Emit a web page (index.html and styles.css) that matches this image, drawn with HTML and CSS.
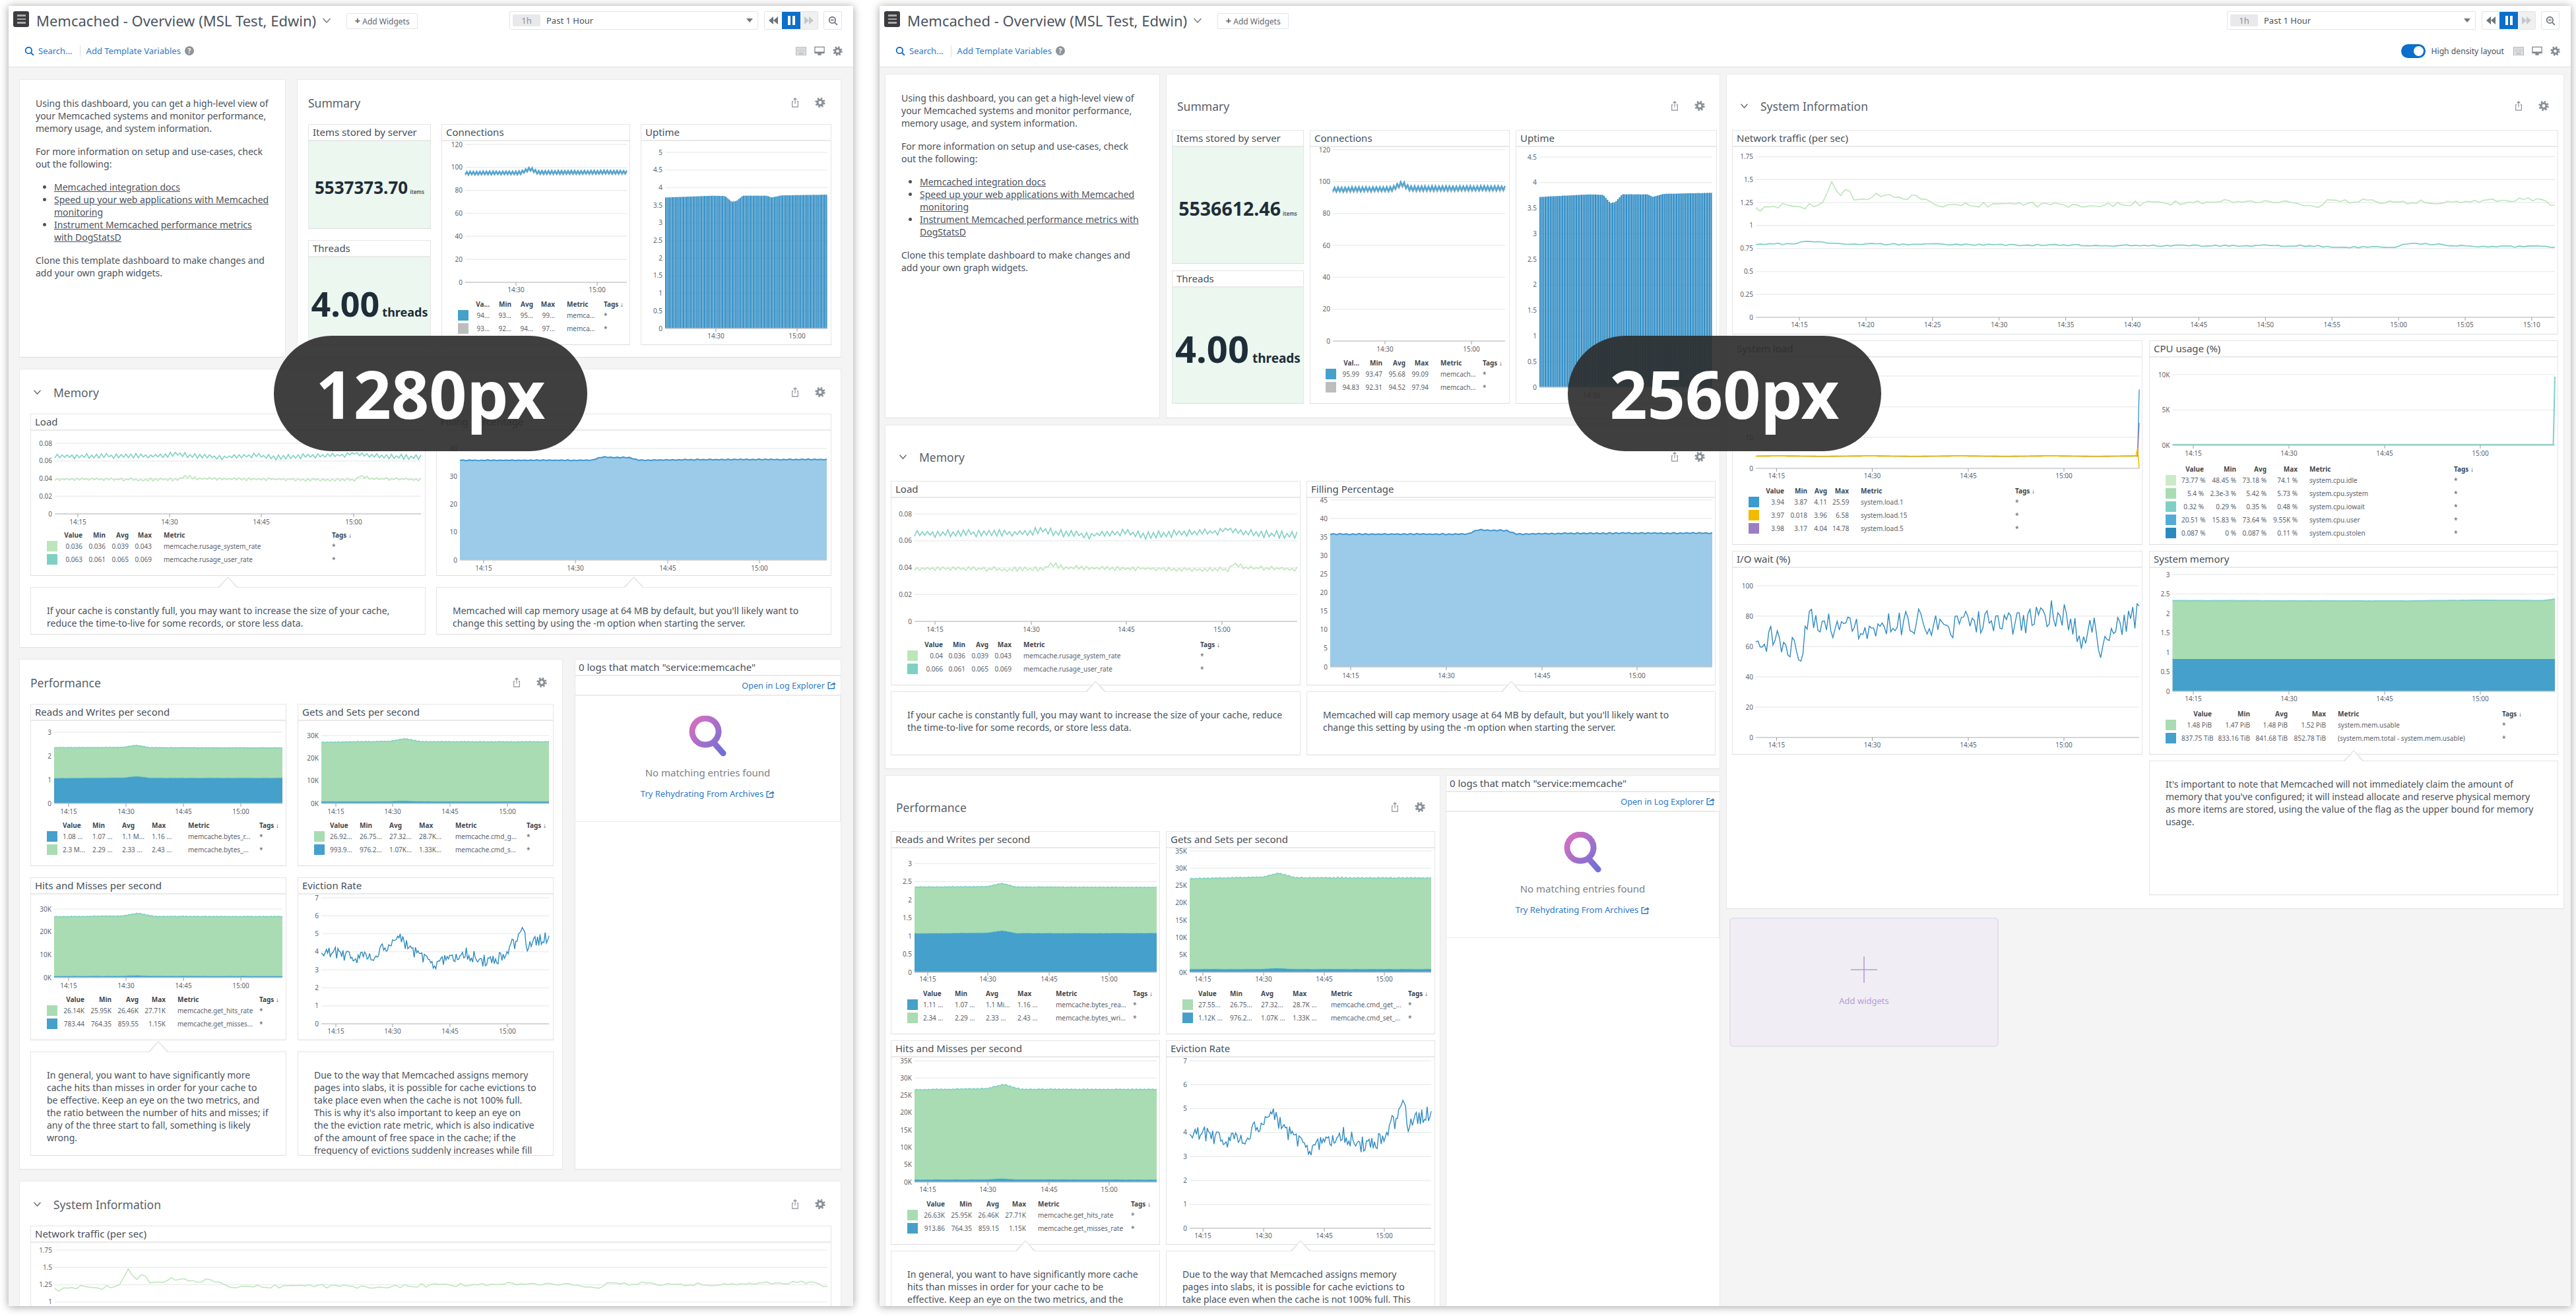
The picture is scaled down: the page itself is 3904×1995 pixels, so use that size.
FILE: index.html
```html
<!DOCTYPE html>
<html lang="en">
<head>
<meta charset="utf-8">
<title>Memcached - Overview</title>
<link rel="stylesheet" href="styles.css">
</head>
<body>
<svg class="defs" width="0" height="0">
  <defs>
    <symbol id="i-gear" viewBox="0 0 24 24"><circle cx="12" cy="12" r="6" fill="none" stroke="currentColor" stroke-width="4.6"/><circle cx="12" cy="12" r="9.6" fill="none" stroke="currentColor" stroke-width="3.8" stroke-dasharray="3.77 3.77"/></symbol>
    <symbol id="i-share" viewBox="0 0 24 24"><path d="M8 9.5H5.5V22h13V9.5H16M12 2v13M8.4 5.6 12 2l3.6 3.6" fill="none" stroke="currentColor" stroke-width="1.7"/></symbol>
    <symbol id="i-chev" viewBox="0 0 14 10"><path d="M1.5 2 7 8l5.5-6" fill="none" stroke="currentColor" stroke-width="1.4"/></symbol>
    <symbol id="i-search" viewBox="0 0 16 16"><circle cx="6.8" cy="6.8" r="5" fill="none" stroke="currentColor" stroke-width="2"/><path d="m10.5 10.5 4.3 4.3" stroke="currentColor" stroke-width="2.2"/></symbol>
    <symbol id="i-zoomout" viewBox="0 0 16 16"><circle cx="6.8" cy="6.8" r="5" fill="none" stroke="currentColor" stroke-width="2"/><path d="m10.5 10.5 4.3 4.3M4.3 6.8h5" stroke="currentColor" stroke-width="2"/></symbol>
    <symbol id="i-kb" viewBox="0 0 18 14"><rect x=".5" y=".5" width="17" height="13" fill="#e6e7e8" stroke="#a6abb0"/><path d="M2.5 3.5h13M2.5 6h13M2.5 8.5h13" stroke="#8f959b" stroke-dasharray="1 1"/><path d="M5 11h8" stroke="#8f959b"/></symbol>
    <symbol id="i-mon" viewBox="0 0 18 16"><rect x="1" y="1" width="16" height="10" fill="#fff" stroke="currentColor" stroke-width="1.4"/><rect x="1" y="9" width="16" height="3" fill="currentColor"/><rect x="6" y="12" width="6" height="3" fill="currentColor"/></symbol>
    <symbol id="i-ext" viewBox="0 0 16 16"><path d="M7 3H2.5v10.5H13V9" fill="none" stroke="currentColor" stroke-width="1.6"/><path d="M6 10c0-4 3-5.6 6-5.6V2l3.5 3.6L12 9V6.6C9.5 6.6 7.5 7.5 6 10z" fill="currentColor"/></symbol>
    <symbol id="i-back" viewBox="0 0 14 12"><path d="M7 0v12L0 6zM14 0v12L7 6z" fill="currentColor"/></symbol>
    <symbol id="i-fwd" viewBox="0 0 14 12"><path d="M0 0v12l7-6zM7 0v12l7-6z" fill="currentColor"/></symbol>
    <linearGradient id="mag" x1="0" y1="0" x2="1" y2="1"><stop offset="0" stop-color="#d86fc0"/><stop offset="1" stop-color="#6f6fd6"/></linearGradient>
    <symbol id="i-mag" viewBox="0 0 60 62"><path d="M26 4a20 20 0 1 0 .01 0zM38 40l15 17" fill="none" stroke="url(#mag)" stroke-width="9" stroke-linecap="round"/></symbol>
  </defs>
</svg>

<div class="desk">

<!-- ========================= 1280 ========================= -->
<div class="win win1">
  <header class="hd">
    <div class="hd-a">
      <span class="burger"><i></i><i></i><i></i></span>
      <h1 class="ttl">Memcached - Overview (MSL Test, Edwin)</h1>
      <svg class="ttl-chev"><use href="#i-chev"/></svg>
      <button class="addw"><b>+</b> Add Widgets</button>
      <div class="time"><span class="pill">1h</span><span class="past">Past 1 Hour</span><span class="caret"></span></div>
      <div class="play"><span class="pb"><svg><use href="#i-back"/></svg></span><span class="pb on"><i></i><i></i></span><span class="pb off"><svg><use href="#i-fwd"/></svg></span></div>
      <span class="zoombtn"><svg><use href="#i-zoomout"/></svg></span>
    </div>
    <div class="hd-b">
      <svg class="srch"><use href="#i-search"/></svg><span class="lnk">Search...</span><span class="div"></span><span class="lnk">Add Template Variables</span><span class="help">?</span>
      <span class="hd-r"><svg class="kb"><use href="#i-kb"/></svg><svg class="mon"><use href="#i-mon"/></svg><svg class="gear-h"><use href="#i-gear"/></svg></span>
    </div>
  </header>
  <main class="board1">
    <div class="r-top1">
      <section class="tx">
        <p>Using this dashboard, you can get a high-level view of your Memcached systems and monitor performance, memory usage, and system information.</p>
        <p>For more information on setup and use-cases, check out the following:</p>
        <ul><li><a>Memcached integration docs</a></li><li><a>Speed up your web applications with Memcached monitoring</a></li><li><a>Instrument Memcached performance metrics with DogStatsD</a></li></ul>
        <p>Clone this template dashboard to make changes and add your own graph widgets.</p>
      </section>
      <section class="sec">
        <div class="sec-h"><h2>Summary</h2><span class="acts"><svg><use href="#i-share"/></svg><svg class="g"><use href="#i-gear"/></svg></span></div>
        <div class="g-sum1">
          <div class="wd"><div class="wt">Items stored by server</div><div class="qv"><b class="q1a">5537373.70</b><span class="q1b">items</span></div></div>
          <div class="wd tall"><div class="wt">Connections</div><div class="chart" id="w1conn"></div>
            <div class="lg lg-c1 pl">
              <b></b><b>Va...</b><b>Min</b><b>Avg</b><b>Max</b><b class="m">Metric</b><b>Tags ↓</b>
              <i class="c-blue"></i><span>94...</span><span>93...</span><span>95...</span><span>99...</span><span class="m">memca...</span><span>*</span>
              <i class="c-gray"></i><span>93...</span><span>92...</span><span>94...</span><span>97...</span><span class="m">memca...</span><span>*</span>
            </div>
          </div>
          <div class="wd tall"><div class="wt">Uptime</div><div class="chart" id="w1up"></div></div>
          <div class="wd"><div class="wt">Threads</div><div class="qv"><b class="q2a">4.00</b><b class="q2b">threads</b></div></div>
        </div>
      </section>
    </div>

    <section class="sec s-mem1">
      <div class="sec-h"><svg class="chev"><use href="#i-chev"/></svg><h2>Memory</h2><span class="acts"><svg><use href="#i-share"/></svg><svg class="g"><use href="#i-gear"/></svg></span></div>
      <div class="g-mem1">
        <div class="wd"><div class="wt">Load</div><div class="chart" id="w1load"></div>
          <div class="lg lg-l1 pl">
            <b></b><b>Value</b><b>Min</b><b>Avg</b><b>Max</b><b class="m">Metric</b><b>Tags ↓</b>
            <i class="c-lgreen"></i><span>0.036</span><span>0.036</span><span>0.039</span><span>0.043</span><span class="m">memcache.rusage_system_rate</span><span>*</span>
            <i class="c-teal"></i><span>0.063</span><span>0.061</span><span>0.065</span><span>0.069</span><span class="m">memcache.rusage_user_rate</span><span>*</span>
          </div>
        </div>
        <div class="wd"><div class="wt">Filling Percentage</div><div class="chart" id="w1fill"></div></div>
        <div class="note">If your cache is constantly full, you may want to increase the size of your cache, reduce the time-to-live for some records, or store less data.</div>
        <div class="note">Memcached will cap memory usage at 64 MB by default, but you'll likely want to change this setting by using the -m option when starting the server.</div>
      </div>
    </section>

    <div class="r-perf1">
      <section class="sec">
        <div class="sec-h"><h2>Performance</h2><span class="acts"><svg><use href="#i-share"/></svg><svg class="g"><use href="#i-gear"/></svg></span></div>
        <div class="g-perf1">
          <div class="wd"><div class="wt">Reads and Writes per second</div><div class="chart" id="w1reads"></div>
            <div class="lg lg-r1 pl left">
              <b></b><b>Value</b><b>Min</b><b>Avg</b><b>Max</b><b class="m">Metric</b><b>Tags ↓</b>
              <i class="c-blue"></i><span>1.08 ...</span><span>1.07 ...</span><span>1.1 M...</span><span>1.16 ...</span><span class="m">memcache.bytes_r...</span><span>*</span>
              <i class="c-green"></i><span>2.3 M...</span><span>2.29 ...</span><span>2.33 ...</span><span>2.43 ...</span><span class="m">memcache.bytes_...</span><span>*</span>
            </div>
          </div>
          <div class="wd"><div class="wt">Gets and Sets per second</div><div class="chart" id="w1gets"></div>
            <div class="lg lg-r1 pl left">
              <b></b><b>Value</b><b>Min</b><b>Avg</b><b>Max</b><b class="m">Metric</b><b>Tags ↓</b>
              <i class="c-green"></i><span>26.92...</span><span>26.75...</span><span>27.32...</span><span>28.7K...</span><span class="m">memcache.cmd_g...</span><span>*</span>
              <i class="c-blue"></i><span>993.9...</span><span>976.2...</span><span>1.07K...</span><span>1.33K...</span><span class="m">memcache.cmd_s...</span><span>*</span>
            </div>
          </div>
          <div class="wd"><div class="wt">Hits and Misses per second</div><div class="chart" id="w1hits"></div>
            <div class="lg lg-h1 pl">
              <b></b><b>Value</b><b>Min</b><b>Avg</b><b>Max</b><b class="m">Metric</b><b>Tags ↓</b>
              <i class="c-green"></i><span>26.14K</span><span>25.95K</span><span>26.46K</span><span>27.71K</span><span class="m">memcache.get_hits_rate</span><span>*</span>
              <i class="c-blue"></i><span>783.44</span><span>764.35</span><span>859.55</span><span>1.15K</span><span class="m">memcache.get_misses...</span><span>*</span>
            </div>
          </div>
          <div class="wd"><div class="wt">Eviction Rate</div><div class="chart" id="w1evict"></div></div>
          <div class="note">In general, you want to have significantly more cache hits than misses in order for your cache to be effective. Keep an eye on the two metrics, and the ratio between the number of hits and misses; if any of the three start to fall, something is likely wrong.</div>
          <div class="note">Due to the way that Memcached assigns memory pages into slabs, it is possible for cache evictions to take place even when the cache is not 100% full. This is why it's also important to keep an eye on the the eviction rate metric, which is also indicative of the amount of free space in the cache; if the frequency of evictions suddenly increases while fill</div>
        </div>
      </section>
      <section class="logs">
        <div class="wt log-t">0 logs that match "service:memcache"</div>
        <div class="log-open"><span class="lnk">Open in Log Explorer</span><svg><use href="#i-ext"/></svg></div>
        <div class="log-body"><svg class="mag"><use href="#i-mag"/></svg><div class="log-no">No matching entries found</div><div class="log-try"><span class="lnk">Try Rehydrating From Archives</span><svg><use href="#i-ext"/></svg></div></div>
      </section>
    </div>

    <section class="sec s-sys1">
      <div class="sec-h"><svg class="chev"><use href="#i-chev"/></svg><h2>System Information</h2><span class="acts"><svg><use href="#i-share"/></svg><svg class="g"><use href="#i-gear"/></svg></span></div>
      <div class="wd net1"><div class="wt">Network traffic (per sec)</div><div class="chart" id="w1net"></div></div>
    </section>
  </main>
</div>

<!-- ========================= 2560 ========================= -->
<div class="win win2">
  <header class="hd">
    <div class="hd-a">
      <span class="burger"><i></i><i></i><i></i></span>
      <h1 class="ttl">Memcached - Overview (MSL Test, Edwin)</h1>
      <svg class="ttl-chev"><use href="#i-chev"/></svg>
      <button class="addw"><b>+</b> Add Widgets</button>
      <div class="time"><span class="pill">1h</span><span class="past">Past 1 Hour</span><span class="caret"></span></div>
      <div class="play"><span class="pb"><svg><use href="#i-back"/></svg></span><span class="pb on"><i></i><i></i></span><span class="pb off"><svg><use href="#i-fwd"/></svg></span></div>
      <span class="zoombtn"><svg><use href="#i-zoomout"/></svg></span>
    </div>
    <div class="hd-b">
      <svg class="srch"><use href="#i-search"/></svg><span class="lnk">Search...</span><span class="div"></span><span class="lnk">Add Template Variables</span><span class="help">?</span>
      <span class="hd-r"><span class="toggle"></span><span class="hdl">High density layout</span><svg class="kb"><use href="#i-kb"/></svg><svg class="mon"><use href="#i-mon"/></svg><svg class="gear-h"><use href="#i-gear"/></svg></span>
    </div>
  </header>
  <main class="board2">
    <div class="col-l">
      <div class="r-top2">
        <section class="tx">
          <p>Using this dashboard, you can get a high-level view of your Memcached systems and monitor performance, memory usage, and system information.</p>
          <p>For more information on setup and use-cases, check out the following:</p>
          <ul><li><a>Memcached integration docs</a></li><li><a>Speed up your web applications with Memcached monitoring</a></li><li><a>Instrument Memcached performance metrics with DogStatsD</a></li></ul>
          <p>Clone this template dashboard to make changes and add your own graph widgets.</p>
        </section>
        <section class="sec s2 h522">
          <div class="sec-h"><h2>Summary</h2><span class="acts"><svg><use href="#i-share"/></svg><svg class="g"><use href="#i-gear"/></svg></span></div>
          <div class="g-sum2">
            <div class="wd"><div class="wt">Items stored by server</div><div class="qv"><b class="q3a">5536612.46</b><span class="q1b">items</span></div></div>
            <div class="wd tall"><div class="wt">Connections</div><div class="chart" id="w2conn"></div>
              <div class="lg lg-c2 pl">
                <b></b><b>Val...</b><b>Min</b><b>Avg</b><b>Max</b><b class="m">Metric</b><b>Tags ↓</b>
                <i class="c-blue"></i><span>95.99</span><span>93.47</span><span>95.68</span><span>99.09</span><span class="m">memcach...</span><span>*</span>
                <i class="c-gray"></i><span>94.83</span><span>92.31</span><span>94.52</span><span>97.94</span><span class="m">memcach...</span><span>*</span>
              </div>
            </div>
            <div class="wd tall"><div class="wt">Uptime</div><div class="chart" id="w2up"></div></div>
            <div class="wd"><div class="wt">Threads</div><div class="qv"><b class="q4a">4.00</b><b class="q4b">threads</b></div></div>
          </div>
        </section>
      </div>

      <section class="sec s2 h522">
        <div class="sec-h"><svg class="chev"><use href="#i-chev"/></svg><h2>Memory</h2><span class="acts"><svg><use href="#i-share"/></svg><svg class="g"><use href="#i-gear"/></svg></span></div>
        <div class="g-mem2">
          <div class="wd"><div class="wt">Load</div><div class="chart" id="w2load"></div>
            <div class="lg lg-l2 pl">
              <b></b><b>Value</b><b>Min</b><b>Avg</b><b>Max</b><b class="m">Metric</b><b>Tags ↓</b>
              <i class="c-lgreen"></i><span>0.04</span><span>0.036</span><span>0.039</span><span>0.043</span><span class="m">memcache.rusage_system_rate</span><span>*</span>
              <i class="c-teal"></i><span>0.066</span><span>0.061</span><span>0.065</span><span>0.069</span><span class="m">memcache.rusage_user_rate</span><span>*</span>
            </div>
          </div>
          <div class="wd"><div class="wt">Filling Percentage</div><div class="chart" id="w2fill"></div></div>
          <div class="note">If your cache is constantly full, you may want to increase the size of your cache, reduce the time-to-live for some records, or store less data.</div>
          <div class="note">Memcached will cap memory usage at 64 MB by default, but you'll likely want to change this setting by using the -m option when starting the server.</div>
        </div>
      </section>

      <div class="r-perf2">
        <section class="sec s2">
          <div class="sec-h"><h2>Performance</h2><span class="acts"><svg><use href="#i-share"/></svg><svg class="g"><use href="#i-gear"/></svg></span></div>
          <div class="g-perf2">
            <div class="wd"><div class="wt">Reads and Writes per second</div><div class="chart" id="w2reads"></div>
              <div class="lg lg-r2 pl left">
                <b></b><b>Value</b><b>Min</b><b>Avg</b><b>Max</b><b class="m">Metric</b><b>Tags ↓</b>
                <i class="c-blue"></i><span>1.11 ...</span><span>1.07 ...</span><span>1.1 Mi...</span><span>1.16 ...</span><span class="m">memcache.bytes_rea...</span><span>*</span>
                <i class="c-green"></i><span>2.34 ...</span><span>2.29 ...</span><span>2.33 ...</span><span>2.43 ...</span><span class="m">memcache.bytes_wri...</span><span>*</span>
              </div>
            </div>
            <div class="wd"><div class="wt">Gets and Sets per second</div><div class="chart" id="w2gets"></div>
              <div class="lg lg-r2 pl left">
                <b></b><b>Value</b><b>Min</b><b>Avg</b><b>Max</b><b class="m">Metric</b><b>Tags ↓</b>
                <i class="c-green"></i><span>27.55...</span><span>26.75...</span><span>27.32...</span><span>28.7K ...</span><span class="m">memcache.cmd_get_...</span><span>*</span>
                <i class="c-blue"></i><span>1.12K ...</span><span>976.2...</span><span>1.07K ...</span><span>1.33K ...</span><span class="m">memcache.cmd_set_...</span><span>*</span>
              </div>
            </div>
            <div class="wd"><div class="wt">Hits and Misses per second</div><div class="chart" id="w2hits"></div>
              <div class="lg lg-h2 pl">
                <b></b><b>Value</b><b>Min</b><b>Avg</b><b>Max</b><b class="m">Metric</b><b>Tags ↓</b>
                <i class="c-green"></i><span>26.63K</span><span>25.95K</span><span>26.46K</span><span>27.71K</span><span class="m">memcache.get_hits_rate</span><span>*</span>
                <i class="c-blue"></i><span>913.86</span><span>764.35</span><span>859.15</span><span>1.15K</span><span class="m">memcache.get_misses_rate</span><span>*</span>
              </div>
            </div>
            <div class="wd"><div class="wt">Eviction Rate</div><div class="chart" id="w2evict"></div></div>
            <div class="note">In general, you want to have significantly more cache hits than misses in order for your cache to be effective. Keep an eye on the two metrics, and the ratio between the number of hits and misses; if any of the three start to fall, something is likely wrong.</div>
            <div class="note">Due to the way that Memcached assigns memory pages into slabs, it is possible for cache evictions to take place even when the cache is not 100% full. This is why it's also important to keep an eye on the the eviction rate metric, which is also indicative of the amount of free space in the cache.</div>
          </div>
        </section>
        <section class="logs">
          <div class="wt log-t">0 logs that match "service:memcache"</div>
          <div class="log-open"><span class="lnk">Open in Log Explorer</span><svg><use href="#i-ext"/></svg></div>
          <div class="log-body"><svg class="mag"><use href="#i-mag"/></svg><div class="log-no">No matching entries found</div><div class="log-try"><span class="lnk">Try Rehydrating From Archives</span><svg><use href="#i-ext"/></svg></div></div>
        </section>
      </div>
    </div>

    <div class="col-r">
      <section class="sec s2 s-sys2">
        <div class="sec-h"><svg class="chev"><use href="#i-chev"/></svg><h2>System Information</h2><span class="acts"><svg><use href="#i-share"/></svg><svg class="g"><use href="#i-gear"/></svg></span></div>
        <div class="g-sys2">
          <div class="wd span2"><div class="wt">Network traffic (per sec)</div><div class="chart" id="w2net"></div></div>
          <div class="wd"><div class="wt">System load</div><div class="chart" id="w2sysl"></div>
            <div class="lg lg-s2 pl rows3">
              <b></b><b>Value</b><b>Min</b><b>Avg</b><b>Max</b><b class="m">Metric</b><b>Tags ↓</b>
              <i class="c-blue2"></i><span>3.94</span><span>3.87</span><span>4.11</span><span>25.59</span><span class="m">system.load.1</span><span>*</span>
              <i class="c-yellow"></i><span>3.97</span><span>0.018</span><span>3.96</span><span>6.58</span><span class="m">system.load.15</span><span>*</span>
              <i class="c-purple"></i><span>3.98</span><span>3.17</span><span>4.04</span><span>14.78</span><span class="m">system.load.5</span><span>*</span>
            </div>
          </div>
          <div class="wd"><div class="wt">CPU usage (%)</div><div class="chart" id="w2cpu"></div>
            <div class="lg lg-cpu pl tight">
              <b></b><b>Value</b><b>Min</b><b>Avg</b><b>Max</b><b class="m">Metric</b><b>Tags ↓</b>
              <i class="c-idle"></i><span>73.77 %</span><span>48.45 %</span><span>73.18 %</span><span>74.1 %</span><span class="m">system.cpu.idle</span><span>*</span>
              <i class="c-green"></i><span>5.4 %</span><span>2.3e-3 %</span><span>5.42 %</span><span>5.73 %</span><span class="m">system.cpu.system</span><span>*</span>
              <i class="c-teal"></i><span>0.32 %</span><span>0.29 %</span><span>0.35 %</span><span>0.48 %</span><span class="m">system.cpu.iowait</span><span>*</span>
              <i class="c-user"></i><span>20.51 %</span><span>15.83 %</span><span>73.64 %</span><span>9.55K %</span><span class="m">system.cpu.user</span><span>*</span>
              <i class="c-stolen"></i><span>0.087 %</span><span>0 %</span><span>0.087 %</span><span>0.11 %</span><span class="m">system.cpu.stolen</span><span>*</span>
            </div>
          </div>
          <div class="wd"><div class="wt">I/O wait (%)</div><div class="chart" id="w2io"></div></div>
          <div class="wd"><div class="wt">System memory</div><div class="chart" id="w2mem"></div>
            <div class="lg lg-mem pl">
              <b></b><b>Value</b><b>Min</b><b>Avg</b><b>Max</b><b class="m">Metric</b><b>Tags ↓</b>
              <i class="c-green"></i><span>1.48 PiB</span><span>1.47 PiB</span><span>1.48 PiB</span><span>1.52 PiB</span><span class="m">system.mem.usable</span><span>*</span>
              <i class="c-blue"></i><span>837.75 TiB</span><span>833.16 TiB</span><span>841.68 TiB</span><span>852.78 TiB</span><span class="m">(system.mem.total - system.mem.usable)</span><span>*</span>
            </div>
          </div>
          <div class="blank"></div>
          <div class="note">It's important to note that Memcached will not immediately claim the amount of memory that you've configured; it will instead allocate and reserve physical memory as more items are stored, using the value of the flag as the upper bound for memory usage.</div>
        </div>
      </section>
      <div class="addcard"><svg class="plus" viewBox="0 0 40 40"><path d="M20 0v40M0 20h40" stroke="currentColor" stroke-width="1.6"/></svg><span>Add widgets</span></div>
    </div>
  </main>
</div>

<div class="badge b1">1280px</div>
<div class="badge b2">2560px</div>
</div>
<script src="charts.js"></script>
</body>
</html>
```
FILE: styles.css
```css
*{box-sizing:border-box}
html,body{margin:0;height:100%;overflow:hidden;background:#fff}
body{font-family:"Noto Sans","Open Sans",sans-serif;color:#4a525c}
.defs{position:absolute}
.desk{position:relative;display:flex;gap:40px;padding:9px 0 0 13px;height:1995px}
.win{height:1971px;overflow:hidden;display:flex;flex-direction:column;background:#f4f4f4;box-shadow:0 1px 12px rgba(0,0,0,.38);flex:none}
.win1{width:1280px}
.win2{width:2563px}

/* header */
.hd{flex:none;height:93px;background:#fff;border-bottom:1px solid #e0e0e0}
.hd-a{display:flex;align-items:center;height:28px;margin-top:8px;padding:0 17px 0 7px}
.burger{width:24px;height:24px;border-radius:3px;background:#3c3c40;display:flex;flex-direction:column;justify-content:center;align-items:center;gap:3px;margin-top:-4px}
.burger i{display:block;width:13px;height:2.4px;background:#aaa}
.ttl{margin:0 0 0 11px;font-weight:400;font-size:22px;color:#4d555e;white-space:nowrap;line-height:28px}
.ttl-chev{width:14px;height:10px;margin-left:9px;color:#707780}
.addw{margin-left:23px;height:24px;width:108px;padding:0;background:#fff;border:1px solid #e4e5e6;border-radius:2px;font:12px "Noto Sans",sans-serif;color:#5f666e;margin-top:2px}
.addw b{font-size:15px;color:#666;line-height:10px}
.time{margin-left:auto;width:377px;height:28px;border:1px solid #e3e4e6;border-radius:2px;display:flex;align-items:center;padding:0 7px 0 4px}
.pill{width:42px;height:18px;background:#e9e9ec;border-radius:2px;text-align:center;line-height:18px;font-size:13px;color:#8a8f95}
.past{margin-left:9px;font-size:13px;color:#4a525c}
.caret{margin-left:auto;border:5px solid transparent;border-top:6px solid #6f767d;border-bottom:0;margin-right:0}
.play{margin-left:9px;width:82px;height:28px;border:1px solid #e3e4e6;border-radius:2px;display:flex}
.pb{flex:1;display:flex;align-items:center;justify-content:center;gap:3px;color:#6d747b}
.pb svg{width:14px;height:12px}
.pb.on{background:#0b6fcb;flex:none;width:28px}
.pb.on i{display:block;width:4px;height:14px;background:#fff}
.pb.off{background:#f0f0f1;color:#c4c7ca}
.zoombtn{margin-left:8px;width:28px;height:28px;border:1px solid #e3e4e6;border-radius:2px;display:flex;align-items:center;justify-content:center;color:#747b82}
.zoombtn svg{width:15px;height:15px}
.hd-b{display:flex;align-items:center;height:20px;margin-top:22px;padding:0 16px 0 24px}
.srch{width:15px;height:15px;color:#0b6fcb}
.lnk{font-size:13px;color:#2b79c8}
.srch + .lnk{margin-left:6px}
.div{width:1px;height:17px;background:#dcdde0;margin:0 9px 0 11px}
.help{margin-left:6px;width:14px;height:14px;border-radius:50%;background:#8f9499;color:#fff;font-size:10px;font-weight:700;line-height:14px;text-align:center}
.hd-r{margin-left:auto;display:flex;align-items:center}
.kb{width:16px;height:13px}
.mon{width:16px;height:15px;margin-left:12px;color:#7f868d}
.gear-h{width:15px;height:15px;margin-left:12px;color:#848a90}
.toggle{position:relative;width:37px;height:21px;border-radius:11px;background:#0b6fcb;margin-right:8px}
.toggle::after{content:"";position:absolute;right:3px;top:3px;width:15px;height:15px;border-radius:50%;background:#fff}
.hdl{font-size:12.2px;color:#4a525c;margin-right:14px}

/* boards */
.board1{display:flex;flex-direction:column;gap:17px;padding:18px 18px 0 16px}
.r-top1{display:grid;grid-template-columns:404px 825px;gap:17px;height:422px}
.r-perf1{display:grid;grid-template-columns:824px 404px;gap:18px;height:774px}
.board2{display:grid;grid-template-columns:1266px 1270px;column-gap:9px;padding:10px 0 0 8px}
.col-l{display:flex;flex-direction:column;gap:9px}
.r-top2{display:grid;grid-template-columns:417px 840px;gap:9px;height:522px;margin-bottom:1px}
.r-perf2{display:grid;grid-template-columns:842px 416px;gap:8px;height:820px}
.col-r{display:flex;flex-direction:column}

/* panels */
.tx,.sec,.logs{background:#fff;border:1px solid #e9e9e9;border-bottom-color:#dfdfdf}
.tx{padding:26px 22px 0 24px;font-size:14px;line-height:19px;color:#4a525c}
.tx p{margin:0 0 16px}
.tx ul{margin:0 0 16px;padding:0 0 0 28px}
.tx a{text-decoration:underline}
.sec{padding-left:16px}
.s2{padding-left:8px}
.h522{height:522px}
.sec-h{display:flex;align-items:center;height:67px;padding:2px 23px 0 0}
.s2 .sec-h{height:84px;padding:13px 22px 2px 8px}
.sec-h h2{margin:0;font-weight:400;font-size:17.5px;color:#5a6169}
.chev{width:13px;height:9px;margin:0 18px 0 4px;color:#59616a}
.acts{margin-left:auto;display:flex;gap:22px;color:#8a9097}
.acts svg{width:16px;height:17px}
.s-mem1{height:423px}
.s-sys1{height:600px}
.s-sys2{height:1266px;flex:none}

/* grids */
.g-sum1{display:grid;grid-template-columns:186px 286px 289px;grid-template-rows:159px 159px;gap:17px 16px}
.g-sum2{display:grid;grid-template-columns:200px 303px 305px;grid-template-rows:203px 202px;gap:10px 9px}
.g-mem1{display:grid;grid-template-columns:599px 599px;grid-template-rows:246px 72px;gap:17px 16px}
.g-mem2{display:grid;grid-template-columns:621px 620px;grid-template-rows:310px 97px;gap:9px}
.g-perf1{display:grid;grid-template-columns:388px 388px;grid-template-rows:246px 247px 158px;gap:17px}
.g-perf2{display:grid;grid-template-columns:408px 408px;grid-template-rows:308px 310px 300px;gap:9px}
.g-sys2{display:grid;grid-template-columns:622px 620px;grid-template-rows:310px 310px 309px 204px;gap:9px 10px}
.span2{grid-column:span 2}
.tall{grid-row:span 2}
.net1{width:1214px;height:400px}

/* widgets */
.wd{display:flex;flex-direction:column;min-width:0;min-height:0;background:#fff;border:1px solid #e4e5e6;border-bottom-color:#dcdddf}
.wt{flex:none;height:25px;line-height:23px;padding-left:6px;font-size:15px;color:#47505a;border-bottom:2px solid #e9e9ea;white-space:nowrap}
.chart{flex:1;min-height:0}
.chart svg{display:block;overflow:visible}
.chart text{font-family:"Noto Sans","Open Sans",sans-serif;font-size:10px;fill:#5f666e}
.qv{flex:1;background:#ebf7ef;display:flex;align-items:baseline;justify-content:center;padding-top:60px;color:#1e2d38;white-space:nowrap}
.g-sum1 .qv{padding-top:52px}
.q1a{font-size:26px}
.q1b{font-size:8px;margin-left:3px;font-weight:600;color:#4a525c}
.q2a{font-size:52px;margin-top:-12px;line-height:60px}
.q2b{font-size:18px;margin-left:4px}
.q3a{font-size:28.5px;padding-top:14px}
.q4a{font-size:56px;line-height:60px;margin-top:2px}
.q4b{font-size:19px;margin-left:5px}

/* legend */
.lg{flex:none;display:grid;column-gap:8px;grid-auto-rows:20px;grid-template-rows:15px;align-items:center;font-size:10px;color:#5a626b;padding-left:24px;padding-bottom:14px;white-space:nowrap}
.lg b{color:#3e4750;font-weight:700;text-align:right}
.lg span{text-align:right}
.lg i{display:block;width:16px;height:16px}
.lg .m,.lg b.m,.lg span.m{text-align:left;padding-left:10px}
.lg b:nth-child(7),.lg span:nth-child(7n){text-align:left}
.lg.left b,.lg.left span{text-align:left}
.lg.tight{padding-bottom:7px}
.lg-c1{grid-template-columns:16px 24px 25px 25px 25px 58px auto}
.lg-l1{grid-template-columns:16px 30px 27px 27px 27px 257px auto}
.lg-r1{grid-template-columns:16px 37px 37px 37px 37px 110px auto}
.lg-h1{grid-template-columns:16px 33px 33px 33px 33px 126px auto}
.lg-c2{grid-template-columns:16px 27px 27px 27px 27px 66px auto;padding-left:23px}
.lg-l2{grid-template-columns:16px 30px 26px 27px 27px 270px auto}
.lg-r2{grid-template-columns:16px 40px 39px 40px 40px 119px auto}
.lg-h2{grid-template-columns:16px 33px 33px 33px 33px 143px auto}
.lg-s2{grid-template-columns:16px 30px 27px 22px 25px 236px auto}
.lg-cpu{grid-template-columns:16px 34px 41px 38px 39px 221px auto}
.lg-mem{grid-template-columns:16px 46px 50px 49px 50px 251px auto}
.c-blue{background:#45a0cb}.c-blue2{background:#3c9bd0}.c-gray{background:#bdbdbd}.c-green{background:#a9dcb2}.c-lgreen{background:#bce6b9}.c-teal{background:#7fd0c4}
.c-yellow{background:#f2bb00}.c-purple{background:#9b7ec4}.c-idle{background:#cbeac8}.c-user{background:#52acd6}.c-stolen{background:#2a8ac0}

/* notes */
.note{position:relative;background:#fff;border:1px solid #e4e5e6;border-bottom-color:#dcdddf;padding:25px 24px 0;font-size:14px;line-height:19px;color:#4a525c;min-height:0}
.note::before,.note::after{content:"";position:absolute;left:50%;margin-left:-16px;top:-17px;width:32px;height:17px;background:#e4e5e6;clip-path:polygon(50% 0,100% 100%,0 100%)}
.note::after{top:-15px;margin-left:-15px;width:30px;height:17px;background:#fff}
.g-perf1 .note:last-child{overflow:hidden;clip-path:inset(-18px 0 0 0)}
.blank{min-height:0}

/* logs */
.logs{display:flex;flex-direction:column}
.log-t{border-bottom:2px solid #e9e9ea;padding-left:5px}
.log-open{flex:none;height:30px;display:flex;align-items:center;justify-content:flex-end;padding-right:7px;border-bottom:2px solid #ebebeb}
.log-open .lnk{font-size:12.7px}
.log-try .lnk{font-size:13px}
.log-open svg,.log-try svg{width:14px;height:14px;margin-left:3px;color:#2b79c8}
.log-body{flex:none;height:191px;display:flex;flex-direction:column;align-items:center;border:1px solid #ededed;border-top:0;border-left:0;padding-top:30px}
.mag{width:60px;height:62px}
.log-no{margin-top:15px;font-size:15px;color:#7b8188;line-height:19px}
.log-try{margin-top:13px;display:flex;align-items:center;line-height:19px}

/* add widgets */
.addcard{flex:none;margin:13px 0 0 5px;width:408px;height:196px;background:#f0eef4;border:2px solid #e4dfec;border-radius:6px;display:flex;flex-direction:column;align-items:center;padding-top:57px;color:#b89ad8;font-size:13px}
.plus{width:40px;height:40px}
.addcard span{margin-top:18px}

/* screenshot labels */
.badge{position:absolute;top:509px;width:475px;height:175px;border-radius:88px;background:rgba(44,44,44,.91);color:#fff;font-weight:700;font-size:100px;line-height:175px;text-align:center}
.b1{left:415px}
.b2{left:2376px}
```
FILE: charts.js
```js
(function () {
  function rng(seed) { return function () { seed = (seed * 16807) % 2147483647; return seed / 2147483647; }; }
  function curve(a, n, noise, seed, zz) {
    var r = rng(seed * 7919), out = [];
    for (var i = 0; i < n; i++) {
      var t = i / (n - 1), k = 0;
      while (k < a.length - 2 && a[k + 1][0] < t) k++;
      var p = a[k], q = a[k + 1];
      var v = p[1] + (q[1] - p[1]) * (t - p[0]) / (q[0] - p[0]);
      v += (r() - 0.5) * noise + (zz ? (i % 2 ? zz : -zz) : 0);
      out.push(v);
    }
    return out;
  }
  var N = function (l) { return l.map(function (v) { return [v, String(v)]; }); };
  var K = function (l) { return l.map(function (v) { return [v * 1000, v + 'K']; }); };
  function X(list) { var L = ['14:15', '14:30', '14:45', '15:00']; return list.map(function (x, i) { return [L[i], x]; }); }

  var D = {
    conn: curve([[0, 95.2], [.34, 95.5], [.4, 99], [.45, 95.8], [1, 96]], 100, .4, 11, 1.3),
    connG: curve([[0, 94], [.34, 94.4], [.4, 97.5], [.45, 94.5], [1, 94.8]], 100, .4, 12, 1.1),
    up: curve([[0, 3.72], [.3, 3.77], [.37, 3.76], [.41, 3.6], [.44, 3.62], [.48, 3.77], [.63, 3.77], [.66, 3.72], [.72, 3.78], [1, 3.8]], 100, .005, 5),
    lg: curve([[0, .039], [.33, .039], [.36, .0425], [.39, .04], [.82, .0385], [.835, .043], [.86, .04], [1, .039]], 150, .0016, 7, .001),
    lt: curve([[0, .065], [.3, .066], [.33, .068], [.37, .066], [.45, .064], [.55, .066], [.6, .064], [.8, .067], [.82, .069], [.85, .066], [1, .064]], 150, .0022, 9, .0018),
    fill: curve([[0, 35.8], [.36, 35.8], [.385, 36.9], [.46, 36.8], [.49, 35.8], [.62, 36], [1, 36.1]], 120, .12, 13, .12),
    rb: curve([[0, 1.08], [.3, 1.1], [.36, 1.16], [.42, 1.09], [1, 1.09]], 120, .005, 15, .004),
    rg: curve([[0, 1.27], [.3, 1.26], [.36, 1.29], [.42, 1.26], [1, 1.25]], 120, .005, 17, .004),
    gb: curve([[0, 1000], [.3, 1050], [.36, 1300], [.42, 1050], [1, 1000]], 120, 60, 19),
    gg: curve([[0, 26000], [.3, 26400], [.37, 27300], [.44, 26200], [1, 26200]], 120, 120, 21, 140),
    hb: curve([[0, 800], [.3, 850], [.36, 1100], [.42, 850], [1, 800]], 120, 60, 23),
    hg: curve([[0, 25800], [.3, 26100], [.37, 27000], [.44, 25900], [1, 25900]], 120, 120, 25, 140),
    ev: curve([[0, 3.8], [.02, 4.1], [.1, 3.7], [.2, 3.7], [.25, 4], [.3, 4.3], [.335, 4.8], [.38, 4.3], [.42, 3.9], [.5, 3.35], [.6, 3.7], [.64, 3.95], [.7, 3.5], [.8, 3.7], [.82, 3.7], [.84, 4.6], [.86, 4.4], [.885, 5.5], [.905, 4.1], [.95, 4.6], [1, 4.8]], 180, .75, 27),
    io: curve([[0, 58], [.03, 62], [.05, 70], [.08, 60], [.12, 58], [.135, 80], [.2, 73], [.3, 71], [.4, 77], [.5, 74], [.6, 76], [.7, 76], [.77, 82], [.82, 78], [.85, 65], [.875, 78], [.9, 60], [.93, 72], [1, 82]], 180, 17, 29),
    ng: curve([[0, 1.17], [.03, 1.22], [.05, 1.19], [.085, 1.25], [.095, 1.46], [.105, 1.34], [.115, 1.44], [.125, 1.25], [.15, 1.33], [.2, 1.31], [.23, 1.22], [.3, 1.23], [.4, 1.22], [.48, 1.24], [.67, 1.27], [.7, 1.18], [.72, 1.28], [.8, 1.25], [.9, 1.26], [.98, 1.28], [1, 1.2]], 180, .055, 31),
    nt: curve([[0, .8], [.05, .8], [.058, .83], [.1, .8], [.3, .79], [.5, .78], [.7, .78], [.72, .76], [.8, .77], [.82, .81], [.9, .77], [1, .77]], 180, .018, 33),
    mb: curve([[0, .83], [1, .83]], 120, .003, 35),
    mg: curve([[0, 1.5], [.6, 1.49], [.8, 1.51], [.97, 1.5], [1, 1.54]], 120, .004, 37)
  };
  function flatEnd(v, tail, n) { var o = []; for (var i = 0; i < n; i++) o.push(v + Math.sin(i / 9) * .03); tail.forEach(function (t, k) { o[n - tail.length + k] = t; }); return o; }

  var CH = {
    w1conn: { xl: 705, xr: 950, y0: 428, top: [120, 219], yt: N([0, 20, 40, 60, 80, 100, 120]), xt: [['14:30', 782], ['15:00', 905]], ly: 439, s: [{ t: 'l', c: '#bdbdbd', w: 1.5, d: D.connG }, { t: 'l', c: '#52a6d2', w: 2.4, d: D.conn }] },
    w1up: { xl: 1008, xr: 1254, y0: 498, top: [5, 231], yt: N([0, .5, 1, 1.5, 2, 2.5, 3, 3.5, 4, 4.5, 5]), xt: [['14:30', 1085], ['15:00', 1208]], ly: 509, s: [{ t: 'b', c: '#2f8cc4', d: D.up }] },
    w1load: { xl: 83, xr: 638, y0: 779, top: [.08, 672], yt: N([0, .02, .04, .06, .08]), xt: X([118, 257, 396, 536]), ly: 791, s: [{ t: 'l', c: '#bce6b9', w: 1.6, d: D.lg }, { t: 'l', c: '#7fd0c4', w: 1.6, d: D.lt }] },
    w1fill: { xl: 697, xr: 1253, y0: 849, top: [40, 680], yt: N([0, 10, 20, 30, 40]), xt: X([733, 872, 1012, 1151]), ly: 861, s: [{ t: 's', l: [{ c: '#9bcbe8', e: '#3f97d0', d: D.fill, ew: 2 }] }] },
    w1reads: { xl: 82, xr: 428, y0: 1218, top: [3, 1110], yt: N([0, 1, 2, 3]), xt: X([104, 191, 278, 365]), ly: 1230, s: [{ t: 's', l: [{ c: '#45a0cb', e: '#7fd0c4', d: D.rb }, { c: '#a9dcb2', e: '#7fd0c4', d: D.rg }] }] },
    w1gets: { xl: 487, xr: 832, y0: 1218, top: [30000, 1115], yt: K([0, 10, 20, 30]), xt: X([509, 595, 682, 769]), ly: 1230, s: [{ t: 's', l: [{ c: '#45a0cb', e: '#7fd0c4', d: D.gb }, { c: '#a9dcb2', e: '#7fd0c4', d: D.gg }] }] },
    w1hits: { xl: 82, xr: 428, y0: 1482, top: [30000, 1378], yt: K([0, 10, 20, 30]), xt: X([104, 191, 278, 365]), ly: 1494, s: [{ t: 's', l: [{ c: '#45a0cb', e: '#7fd0c4', d: D.hb }, { c: '#a9dcb2', e: '#7fd0c4', d: D.hg }] }] },
    w1evict: { xl: 487, xr: 832, y0: 1552, top: [7, 1361], yt: N([0, 1, 2, 3, 4, 5, 6, 7]), xt: X([509, 595, 682, 769]), ly: 1563, s: [{ t: 'l', c: '#2f8cc2', w: 1.4, d: D.ev }] },
    w1net: { xl: 83, xr: 1254, y0: 2079, top: [1.75, 1895], yt: N([1, 1.25, 1.5, 1.75]), xt: [], ly: 0, noBase: 1, s: [{ t: 'l', c: '#bce6b9', w: 1.5, d: D.ng }] },

    w2conn: { xl: 2020, xr: 2281, y0: 517, top: [120, 227], yt: N([0, 20, 40, 60, 80, 100, 120]), xt: [['14:30', 2099], ['15:00', 2230]], ly: 529, s: [{ t: 'l', c: '#bdbdbd', w: 1.5, d: D.connG }, { t: 'l', c: '#52a6d2', w: 2.4, d: D.conn }] },
    w2up: { xl: 2333, xr: 2595, y0: 587, top: [4.5, 238], yt: N([0, .5, 1, 1.5, 2, 2.5, 3, 3.5, 4, 4.5]), xt: [['14:30', 2412], ['15:00', 2543]], ly: 599, s: [{ t: 'b', c: '#2f8cc4', d: D.up }] },
    w2load: { xl: 1386, xr: 1966, y0: 942, top: [.08, 779], yt: N([0, .02, .04, .06, .08]), xt: X([1417, 1563, 1707, 1852]), ly: 954, s: [{ t: 'l', c: '#bce6b9', w: 1.6, d: D.lg }, { t: 'l', c: '#7fd0c4', w: 1.6, d: D.lt }] },
    w2fill: { xl: 2016, xr: 2595, y0: 1011, top: [45, 758], yt: N([0, 5, 10, 15, 20, 25, 30, 35, 40, 45]), xt: X([2047, 2192, 2337, 2481]), ly: 1024, s: [{ t: 's', l: [{ c: '#9bcbe8', e: '#3f97d0', d: D.fill, ew: 2 }] }] },
    w2reads: { xl: 1386, xr: 1753, y0: 1474, top: [3, 1309], yt: N([0, .5, 1, 1.5, 2, 2.5, 3]), xt: X([1406, 1497, 1590, 1681]), ly: 1484, s: [{ t: 's', l: [{ c: '#45a0cb', e: '#7fd0c4', d: D.rb }, { c: '#a9dcb2', e: '#7fd0c4', d: D.rg }] }] },
    w2gets: { xl: 1803, xr: 2169, y0: 1474, top: [35000, 1290], yt: K([0, 5, 10, 15, 20, 25, 30, 35]), xt: X([1823, 1915, 2007, 2098]), ly: 1484, s: [{ t: 's', l: [{ c: '#45a0cb', e: '#7fd0c4', d: D.gb }, { c: '#a9dcb2', e: '#7fd0c4', d: D.gg }] }] },
    w2hits: { xl: 1386, xr: 1753, y0: 1792, top: [35000, 1608], yt: K([0, 5, 10, 15, 20, 25, 30, 35]), xt: X([1406, 1497, 1590, 1681]), ly: 1803, s: [{ t: 's', l: [{ c: '#45a0cb', e: '#7fd0c4', d: D.hb }, { c: '#a9dcb2', e: '#7fd0c4', d: D.hg }] }] },
    w2evict: { xl: 1803, xr: 2169, y0: 1862, top: [7, 1608], yt: N([0, 1, 2, 3, 4, 5, 6, 7]), xt: X([1823, 1915, 2007, 2098]), ly: 1873, s: [{ t: 'l', c: '#2f8cc2', w: 1.4, d: D.ev }] },
    w2net: { xl: 2661, xr: 3872, y0: 481, top: [1.75, 237.5], yt: N([0, .25, .5, .75, 1, 1.25, 1.5, 1.75]), xt: ['14:15', '14:20', '14:25', '14:30', '14:35', '14:40', '14:45', '14:50', '14:55', '15:00', '15:05', '15:10'].map(function (l, i) { return [l, 2727 + i * 100.9]; }), ly: 492.5, s: [{ t: 'l', c: '#bce6b9', w: 1.6, d: D.ng }, { t: 'l', c: '#7fd0c4', w: 1.8, d: D.nt }] },
    w2sysl: { xl: 2661, xr: 3242, y0: 710, top: [30, 570], yt: N([0, 10, 20, 30]), xt: X([2692.5, 2837.5, 2983, 3128]), ly: 721, s: [{ t: 'l', c: '#3c9bd0', w: 1.4, d: flatEnd(3.95, [3.95, 25.59], 240) }, { t: 'l', c: '#9b7ec4', w: 1.4, d: flatEnd(3.98, [3.98, 14.78], 240) }, { t: 'l', c: '#f2bb00', w: 1.6, d: flatEnd(3.97, [3.97, 6.58, 0], 240) }] },
    w2cpu: { xl: 3292.5, xr: 3872, y0: 675, top: [10000, 568], yt: K([0, 5, 10]), xt: X([3324, 3469, 3614, 3759]), ly: 687.5, s: [{ t: 'l', c: '#7fd0c4', w: 2, d: flatEnd(100, [100, 9720], 240) }] },
    w2io: { xl: 2661, xr: 3242, y0: 1118, top: [100, 888], yt: N([0, 20, 40, 60, 80, 100]), xt: X([2692.5, 2837.5, 2983, 3128]), ly: 1129.5, s: [{ t: 'l', c: '#2f8cc2', w: 1.4, d: D.io }] },
    w2mem: { xl: 3292.5, xr: 3872, y0: 1048, top: [3, 871], yt: N([0, .5, 1, 1.5, 2, 2.5, 3]), xt: X([3324, 3469, 3614, 3759]), ly: 1059, s: [{ t: 's', l: [{ c: '#45a0cb', e: '#45a0cb', d: D.mb }, { c: '#a9dcb2', e: '#7fd0c4', d: D.mg, ew: 2 }] }] }
  };

  function pts(xs, ys) { return xs.map(function (x, i) { return x.toFixed(1) + ',' + ys[i].toFixed(1); }).join(' '); }

  Object.keys(CH).forEach(function (id) {
    var c = CH[id], el = document.getElementById(id);
    if (!el) return;
    var r = el.getBoundingClientRect();
    var sc = (c.y0 - c.top[1]) / c.top[0];
    var Y = function (v) { return c.y0 - v * sc; };
    var o = '<svg xmlns="http://www.w3.org/2000/svg" width="' + r.width + '" height="' + r.height + '" viewBox="' + r.left + ' ' + r.top + ' ' + r.width + ' ' + r.height + '">';
    c.yt.forEach(function (t) {
      var y = Y(t[0]);
      if (t[0] !== 0) o += '<line x1="' + c.xl + '" x2="' + c.xr + '" y1="' + y + '" y2="' + y + '" stroke="#eceeee" stroke-width="1.5"/>';
      o += '<text x="' + (c.xl - 4) + '" y="' + y + '" dy=".35em" text-anchor="end">' + t[1] + '</text>';
    });
    c.s.forEach(function (s) {
      var n, xs;
      if (s.t === 'b') {
        n = s.d.length; var p = (c.xr - c.xl) / n;
        s.d.forEach(function (v, i) { o += '<rect x="' + (c.xl + i * p).toFixed(2) + '" y="' + Y(v).toFixed(1) + '" width="' + (p - .45).toFixed(2) + '" height="' + (c.y0 - Y(v)).toFixed(1) + '" fill="' + s.c + '"/>'; });
      } else if (s.t === 'l') {
        n = s.d.length;
        xs = s.d.map(function (_, i) { return c.xl + i / (n - 1) * (c.xr - c.xl); });
        o += '<polyline fill="none" stroke="' + s.c + '" stroke-width="' + s.w + '" points="' + pts(xs, s.d.map(Y)) + '"/>';
      } else {
        var base = null;
        s.l.forEach(function (l) {
          n = l.d.length;
          xs = l.d.map(function (_, i) { return c.xl + i / (n - 1) * (c.xr - c.xl); });
          var cum = l.d.map(function (v, i) { return v + (base ? base[i] : 0); });
          var top = pts(xs, cum.map(Y));
          var bot = base ? pts(xs.slice().reverse(), base.slice().reverse().map(Y)) : c.xr + ',' + c.y0 + ' ' + c.xl + ',' + c.y0;
          o += '<polygon fill="' + l.c + '" points="' + top + ' ' + bot + '"/>';
          o += '<polyline fill="none" stroke="' + l.e + '" stroke-width="' + (l.ew || 1.5) + '" points="' + top + '"/>';
          base = cum;
        });
      }
    });
    if (!c.noBase) o += '<line x1="' + c.xl + '" x2="' + c.xr + '" y1="' + c.y0 + '" y2="' + c.y0 + '" stroke="#c6c8ca" stroke-width="1.6"/>';
    c.xt.forEach(function (t) {
      o += '<line x1="' + t[1] + '" x2="' + t[1] + '" y1="' + c.y0 + '" y2="' + (c.y0 + 5) + '" stroke="#9a9fa4"/>';
      o += '<text x="' + t[1] + '" y="' + c.ly + '" dy=".35em" text-anchor="middle">' + t[0] + '</text>';
    });
    el.innerHTML = o + '</svg>';
  });
})();
```
